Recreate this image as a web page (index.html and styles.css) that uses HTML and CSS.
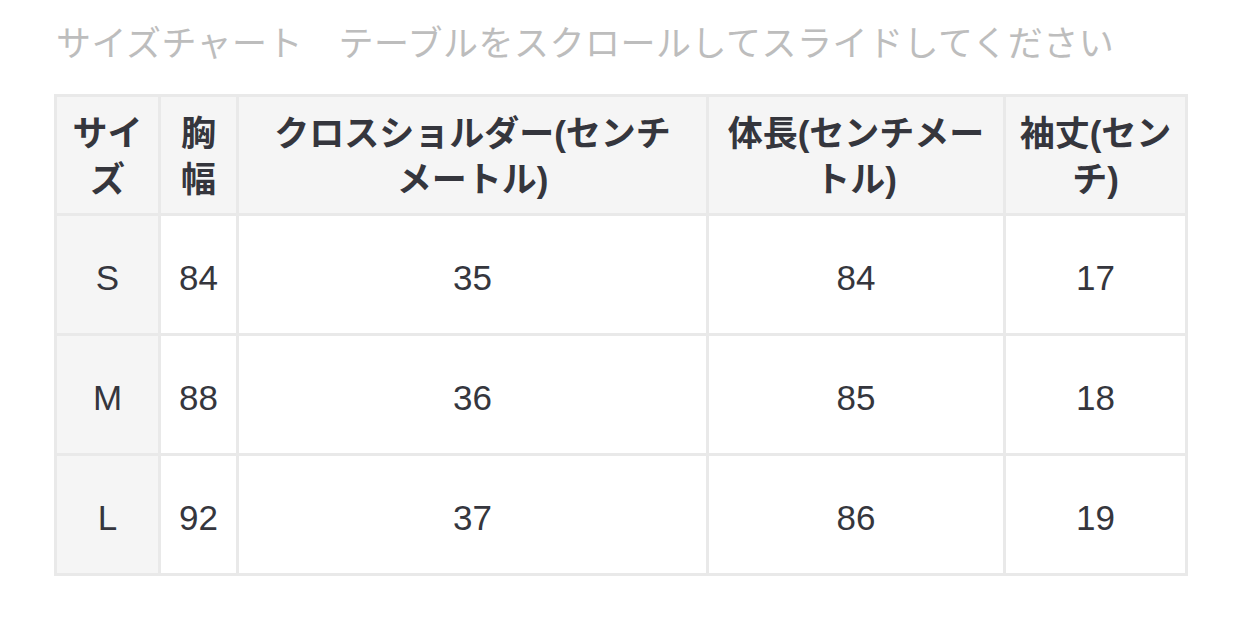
FILE: index.html
```html
<!DOCTYPE html>
<html lang="ja">
<head>
<meta charset="utf-8">
<link rel="stylesheet" href="styles.css">
</head>
<body>
<div class="page">
  <p class="hint">サイズチャート　テーブルをスクロールしてスライドしてください</p>
  <table class="chart">
    <colgroup>
      <col class="c1"><col class="c2"><col class="c3"><col class="c4"><col class="c5">
    </colgroup>
    <thead>
      <tr>
        <th>サイズ</th>
        <th>胸幅</th>
        <th>クロスショルダー(センチメートル)</th>
        <th>体長(センチメートル)</th>
        <th>袖丈(センチ)</th>
      </tr>
    </thead>
    <tbody>
      <tr><td class="size">S</td><td>84</td><td>35</td><td>84</td><td>17</td></tr>
      <tr><td class="size">M</td><td>88</td><td>36</td><td>85</td><td>18</td></tr>
      <tr><td class="size">L</td><td>92</td><td>37</td><td>86</td><td>19</td></tr>
    </tbody>
  </table>
</div>
</body>
</html>
```
FILE: styles.css
```css
html, body {
  margin: 0;
  padding: 0;
  background: #ffffff;
}
.page {
  padding: 23px 0 0 54px;
  font-family: "Liberation Sans", "Noto Sans CJK JP", sans-serif;
  color: #35363d;
}
.hint {
  margin: 0 0 36px 2px;
  font-family: "Noto Sans CJK JP", sans-serif;
  font-size: 35px;
  line-height: 35px;
  letter-spacing: 0.5px;
  color: #bdbdbd;
  font-weight: 400;
  white-space: nowrap;
}
.chart {
  border-collapse: separate;
  border-spacing: 3px;
  background: #e9e9e9;
  table-layout: fixed;
  width: 1134px;
}
.c1 { width: 101px; }
.c2 { width: 75px; }
.c3 { width: 467px; }
.c4 { width: 294px; }
.c5 { width: 179px; }
.chart th,
.chart td {
  text-align: center;
  vertical-align: middle;
  font-size: 35px;
  line-break: strict;
}
.chart th {
  height: 116px;
  padding: 4px 12px 0;
  box-sizing: border-box;
  background: #f5f5f5;
  font-weight: 700;
  line-height: 46px;
}
.chart td {
  height: 117px;
  padding: 6px 12px 0;
  box-sizing: border-box;
  background: #ffffff;
  font-weight: 400;
  line-height: 40px;
}
.chart td.size {
  background: #f5f5f5;
}
```
